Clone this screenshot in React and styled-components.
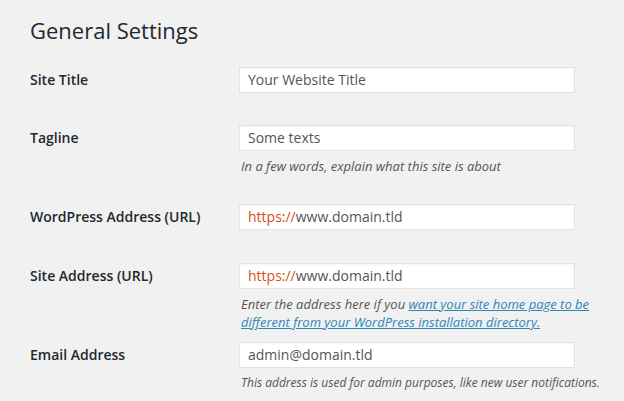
import React from "react";
import styled, { createGlobalStyle } from "styled-components";

const Global = createGlobalStyle`
  html, body {
    margin: 0;
    padding: 0;
    background: #f1f1f1;
  }
  body {
    font-family: "Open Sans", "Noto Sans", sans-serif;
    color: #23282d;
  }
`;

const Page = styled.div`
  width: 624px;
  height: 401px;
  box-sizing: border-box;
  padding: 15px 0 0 30px;
  overflow: hidden;
`;

const Title = styled.h1`
  margin: 0 0 22px 0;
  font-size: 22px;
  font-weight: 400;
  line-height: 30px;
  color: #23282d;
`;

const Row = styled.div`
  display: grid;
  grid-template-columns: 209px 336px;
  align-items: start;
  margin-bottom: ${(p) => p.$space}px;
`;

const Label = styled.div`
  font-size: 14px;
  font-weight: 600;
  line-height: 26px;
  color: #23282d;
`;

const Field = styled.div`
  display: flex;
  flex-direction: column;
`;

const Input = styled.div`
  height: 26px;
  box-sizing: border-box;
  background: #fff;
  border: 1px solid #e3e3e3;
  box-shadow: inset 0 1px 2px rgba(0, 0, 0, 0.04);
  padding: 0 8px;
  font-size: 14px;
  line-height: 24px;
  color: #555;
`;

const Scheme = styled.span`
  color: #d54e21;
`;

const Desc = styled.p`
  margin: 6px 0 0 2px;
  font-size: ${(p) => (p.$small ? 12 : 13)}px;
  font-style: italic;
  line-height: 18px;
  color: #555;
  width: 372px;
`;

const Link = styled.a`
  color: #2e86b8;
  text-decoration: underline;
`;

export default function App() {
  return (
    <Page>
      <Global />
      <Title>General Settings</Title>
      <Row $space={32}>
        <Label>Site Title</Label>
        <Field>
          <Input>Your Website Title</Input>
        </Field>
      </Row>
      <Row $space={29}>
        <Label>Tagline</Label>
        <Field>
          <Input>Some texts</Input>
          <Desc>In a few words, explain what this site is about</Desc>
        </Field>
      </Row>
      <Row $space={33}>
        <Label>WordPress Address (URL)</Label>
        <Field>
          <Input>
            <Scheme>https://</Scheme>www.domain.tld
          </Input>
        </Field>
      </Row>
      <Row $space={11}>
        <Label>Site Address (URL)</Label>
        <Field>
          <Input>
            <Scheme>https://</Scheme>www.domain.tld
          </Input>
          <Desc>
            Enter the address here if you{" "}
            <Link href="#">
              want your site home page to be different from your WordPress
              installation directory.
            </Link>
          </Desc>
        </Field>
      </Row>
      <Row $space={0}>
        <Label>Email Address</Label>
        <Field>
          <Input>admin@domain.tld</Input>
          <Desc $small>
            This address is used for admin purposes, like new user notifications.
          </Desc>
        </Field>
      </Row>
    </Page>
  );
}
